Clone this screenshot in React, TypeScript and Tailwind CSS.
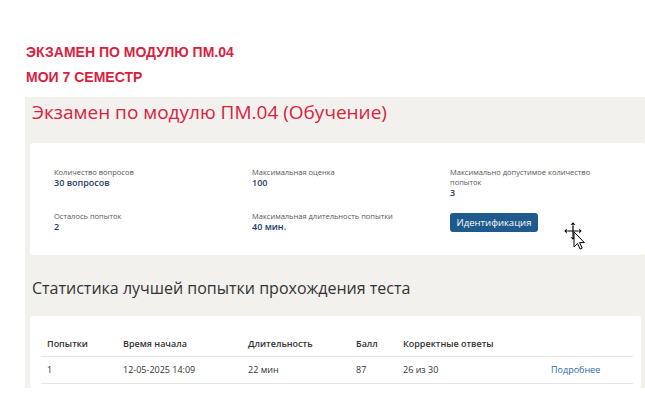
import React from "react";

type Info = { label: string; value?: string };

const firstRow: Info[] = [
  { label: "Количество вопросов", value: "30 вопросов" },
  { label: "Максимальная оценка", value: "100" },
  { label: "Максимально допустимое количество попыток", value: "3" },
];

const secondRow: Info[] = [
  { label: "Осталось попыток", value: "2" },
  { label: "Максимальная длительность попытки", value: "40 мин." },
];

const columns = ["Попытки", "Время начала", "Длительность", "Балл", "Корректные ответы", ""];
const attempts = [["1", "12-05-2025 14:09", "22 мин", "87", "26 из 30"]];

function InfoItem({ label, value }: Info) {
  return (
    <div>
      <div className="text-[7.5px] leading-[10px] text-[#555]">{label}</div>
      <div className="text-[9px] leading-[12px] font-semibold text-[#1c3d6b]">{value}</div>
    </div>
  );
}

function MoveCursor() {
  return (
    <svg
      className="absolute left-[563px] top-[221px]"
      width="24"
      height="30"
      viewBox="0 0 24 30"
    >
      {/* four-way arrows */}
      <g stroke="#fff" strokeWidth="3" strokeLinecap="round">
        <path d="M10 3v14M3 10h14" />
      </g>
      <path d="M10 3v14M3 10h14" stroke="#000" strokeWidth="1.2" />
      <path d="M10 1l-3 3h6zM10 19l-3-3h6zM1 10l3-3v6zM19 10l-3-3v6z" fill="#000" stroke="#fff" strokeWidth="0.6" />
      {/* pointer */}
      <path
        d="M11 11v15l3.5-3.5 2.6 5.6 2.1-1-2.6-5.5h4.8z"
        fill="#fff"
        stroke="#000"
        strokeWidth="1"
        strokeLinejoin="round"
      />
    </svg>
  );
}

export default function App() {
  return (
    <div className="relative h-[404px] w-[645px] overflow-hidden bg-white font-['Open_Sans',sans-serif]">
      <div className="pl-[26px] pt-[40px] font-['Liberation_Sans',Arial,sans-serif] text-[14px] font-bold leading-[25px] text-[#d91f3e]">
        <div>ЭКЗАМЕН ПО МОДУЛЮ ПМ.04</div>
        <div>МОИ 7 СЕМЕСТР</div>
      </div>

      <div className="ml-[25px] mt-[7px] bg-[#f2f1ee] pl-[5px]">
        <h1 className="pl-[2px] text-[19px] leading-[30px] font-medium text-[#d7233f]">
          Экзамен по модулю ПМ.04 (Обучение)
        </h1>

        <div className="mt-[16px] rounded-[3px] bg-white pb-[22px] pl-[24px] pt-[24px]">
          <div className="grid grid-cols-[198px_198px_160px] gap-y-[12px]">
            {firstRow.map((item) => (
              <InfoItem key={item.label} {...item} />
            ))}
            {secondRow.map((item) => (
              <InfoItem key={item.label} {...item} />
            ))}
            <div className="pt-[2px]">
              <button className="block h-[19px] w-[88px] rounded-[3px] bg-[#1f5a8d] text-[9.5px] leading-[19px] text-white">
                Идентификация
              </button>
            </div>
          </div>
        </div>

        <h2 className="mt-[20px] pl-[2px] text-[16px] leading-[26px] text-[#333]">
          Статистика лучшей попытки прохождения теста
        </h2>

        <div className="mr-[4px] mt-[15px] rounded-[3px] bg-white pb-[4px] pl-[11px] pr-[8px] pt-[16px]">
          <table className="w-full border-collapse text-left text-[9px] text-[#333]">
            <colgroup>
              <col className="w-[76px]" />
              <col className="w-[125px]" />
              <col className="w-[108px]" />
              <col className="w-[47px]" />
              <col className="w-[148px]" />
              <col />
            </colgroup>
            <thead>
              <tr className="h-[24px] border-b border-[#e6e6e6]">
                {columns.map((c) => (
                  <th key={c} className="pl-[6px] font-semibold">
                    {c}
                  </th>
                ))}
              </tr>
            </thead>
            <tbody>
              {attempts.map((row) => (
                <tr key={row[0]} className="h-[27px] border-b border-[#e6e6e6]">
                  {row.map((cell, i) => (
                    <td key={i} className="pl-[6px]">
                      {cell}
                    </td>
                  ))}
                  <td className="pl-[6px] text-[#2f6aa3]">Подробнее</td>
                </tr>
              ))}
            </tbody>
          </table>
        </div>
      </div>

      <MoveCursor />
    </div>
  );
}
